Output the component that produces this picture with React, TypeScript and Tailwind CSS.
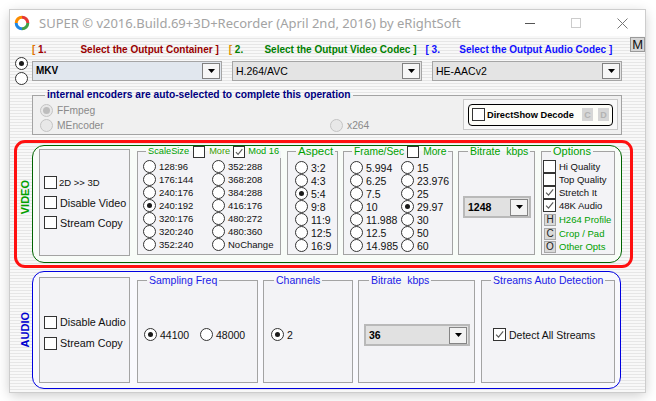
import React from "react";

function Radio({ checked = false, disabled = false }: { checked?: boolean; disabled?: boolean }) {
  return (
    <span
      className={`flex h-[13px] w-[13px] shrink-0 items-center justify-center rounded-full border ${
        disabled ? "border-[#c4c4c4] bg-[#e8e8e8]" : "border-[#333333] bg-white"
      }`}
    >
      {checked ? (
        <span className={`rounded-full ${disabled ? "h-[7px] w-[7px] bg-[#bdbdbd]" : "h-[5px] w-[5px] bg-[#1a1a1a]"}`} />
      ) : null}
    </span>
  );
}

function Check({ checked = false, size = "h-[13px] w-[13px]" }: { checked?: boolean; size?: string }) {
  return (
    <span className={`inline-flex shrink-0 items-center justify-center border border-[#333333] bg-white align-top ${size}`}>
      {checked ? (
        <svg viewBox="0 0 12 12" className="h-full w-full">
          <path d="M2.3 6.1 L4.9 8.8 L10 2.6" fill="none" stroke="#5a5a5a" strokeWidth="1.3" />
        </svg>
      ) : null}
    </span>
  );
}

function Arrow() {
  return (
    <svg width="7" height="4" viewBox="0 0 7 4">
      <path d="M0 0H7L3.5 4Z" fill="#000" />
    </svg>
  );
}

function Combo({ value, bold = false, bg }: { value: string; bold?: boolean; bg: string }) {
  return (
    <div className={`flex h-[20px] w-[190px] items-center border border-[#a5a5a5] ${bg}`}>
      <span className={`flex-1 pl-[3px] leading-[12px] ${bold ? "text-[10px] font-bold" : "text-[10.5px]"}`}>{value}</span>
      <span className="mr-[1px] flex h-[16px] w-[18px] items-center justify-center border border-[#808080] bg-[#f6f6f6]">
        <Arrow />
      </span>
    </div>
  );
}

function Combo2({ value, w }: { value: string; w: string }) {
  return (
    <div className={`flex h-[22px] items-center border-2 border-[#b9b9b9] bg-[#e1e1e1] ${w}`}>
      <span className="flex-1 pl-[3px] text-[10.5px] font-bold leading-[12px]">{value}</span>
      <span className="mr-[1px] flex h-[17px] w-[18px] items-center justify-center border border-[#858585] bg-[#f2f2f2]">
        <Arrow />
      </span>
    </div>
  );
}

function RItem({ label, checked = false, text = "text-[10.5px]" }: { label: string; checked?: boolean; text?: string }) {
  return (
    <div className="flex h-[13px] items-center">
      <Radio checked={checked} />
      <span className={`ml-[3px] whitespace-nowrap leading-[12px] text-[#111] ${text}`}>{label}</span>
    </div>
  );
}

function CItem({ label, checked = false }: { label: string; checked?: boolean }) {
  return (
    <div className="flex h-[13px] items-center">
      <Check checked={checked} />
      <span className="ml-[3px] whitespace-nowrap text-[9.5px] leading-[12px] text-[#111]">{label}</span>
    </div>
  );
}

function BItem({ k, label }: { k: string; label: string }) {
  return (
    <div className="flex h-[13px] items-center pl-[1px]">
      <span className="flex h-[12px] w-[12px] items-center justify-center border border-[#a8a8a8] bg-[#d9d9d9] text-[10px] leading-[10px] text-[#222]">
        {k}
      </span>
      <span className="ml-[3px] whitespace-nowrap text-[9.5px] leading-[12px] text-[#00a000]">{label}</span>
    </div>
  );
}

function Group({
  title,
  legend = "ml-[9px]",
  className,
  children,
}: {
  title: React.ReactNode;
  legend?: string;
  className: string;
  children?: React.ReactNode;
}) {
  return (
    <fieldset className={`min-w-0 shrink-0 border border-[#a3a3a3] bg-[#f3f3f6] ${className}`}>
      <legend className={`whitespace-pre px-[2px] leading-[13px] ${legend}`}>{title}</legend>
      {children}
    </fieldset>
  );
}

function CbRow({ label, small = false }: { label: string; small?: boolean }) {
  return (
    <div className="flex h-[13px] items-center">
      <Check />
      <span className={`whitespace-nowrap leading-[12px] text-[#111] ${small ? "ml-[2px] text-[9.5px]" : "ml-[3px] text-[10.75px]"}`}>
        {label}
      </span>
    </div>
  );
}

function AppIcon() {
  return (
    <svg width="16" height="16" viewBox="0 0 16 16">
      <path d="M8 2.2 A5.8 5.8 0 0 1 13.8 8" fill="none" stroke="#e53935" strokeWidth="3" />
      <path d="M13.8 8 A5.8 5.8 0 0 1 8 13.8" fill="none" stroke="#43a047" strokeWidth="3" />
      <path d="M8 13.8 A5.8 5.8 0 0 1 2.2 8" fill="none" stroke="#1e88e5" strokeWidth="3" />
      <path d="M2.2 8 A5.8 5.8 0 0 1 8 2.2" fill="none" stroke="#fb8c00" strokeWidth="3" />
    </svg>
  );
}

export default function App() {
  const scale1 = ["128:96", "176:144", "240:176", "240:192", "320:176", "320:240", "352:240"];
  const scale2 = ["352:288", "368:208", "384:288", "416:176", "480:272", "480:360", "NoChange"];
  const aspect = ["3:2", "4:3", "5:4", "9:8", "11:9", "12:5", "16:9"];
  const fps1 = ["5.994", "6.25", "7.5", "10", "11.988", "12.5", "14.985"];
  const fps2 = ["15", "23.976", "25", "29.97", "30", "50", "60"];

  return (
    <div className="h-[401px] w-[656px] overflow-hidden bg-white font-['Liberation_Sans',Arial,sans-serif] text-black">
      <div className="ml-[10px] mt-[10px] flex h-[382px] w-[635px] flex-col shadow-[0_0_0_1px_#cdcdcd,0_3px_12px_rgba(0,0,0,0.22)]">
        {/* Title bar */}
        <div className="flex h-[26px] shrink-0 items-center bg-white">
          <span className="ml-[4px] flex">
            <AppIcon />
          </span>
          <span className="ml-[9px] whitespace-nowrap font-['Noto_Sans',sans-serif] text-[13px] leading-[16px] text-[#a3a3a3]">
            SUPER © v2016.Build.69+3D+Recorder (April 2nd, 2016) by eRightSoft
          </span>
          <div className="ml-auto flex h-full">
            <div className="flex w-[46px] items-center justify-center">
              <span className="h-[1px] w-[10px] bg-[#555]" />
            </div>
            <div className="flex w-[46px] items-center justify-center">
              <span className="h-[10px] w-[10px] border border-[#cccccc]" />
            </div>
            <div className="flex w-[46px] items-center justify-center">
              <svg width="11" height="11" viewBox="0 0 11 11">
                <path d="M0.5 0.5 L10.5 10.5 M10.5 0.5 L0.5 10.5" stroke="#777" strokeWidth="1" />
              </svg>
            </div>
          </div>
        </div>

        {/* Body */}
        <div className="flex flex-1 flex-col bg-[repeating-linear-gradient(180deg,#f8f8f8_0px,#f8f8f8_2px,#e6e6e6_2px,#e6e6e6_3px)]">
          {/* labels row */}
          <div className="mt-[8px] flex h-[12px] items-start pl-[22px] text-[10px] font-bold leading-[12px]">
            <div className="flex w-[200px] justify-between whitespace-pre pr-[10px]">
              <span>
                <span className="text-[#e07000]">[ </span>
                <span className="text-[#a00000]">1.</span>
              </span>
              <span className="text-[#990000]">Select the Output Container ]</span>
            </div>
            <div className="flex w-[200px] justify-between whitespace-pre pr-[9px]">
              <span>
                <span className="text-[#e09000]">[ </span>
                <span className="text-[#008000]">2.</span>
              </span>
              <span className="text-[#008000]">Select the Output Video Codec ]</span>
            </div>
            <div className="flex w-[200px] justify-between whitespace-pre pr-[10px]">
              <span className="text-[#1010ff]">[ 3.</span>
              <span className="text-[#1010ff]">Select the Output Audio Codec ]</span>
            </div>
            <span className="-mt-[7px] ml-[8px] flex h-[15px] w-[15px] items-center justify-center border border-[#9a9a9a] bg-[#d6d6d6] text-[13px] font-normal leading-[13px] text-[#111]">
              M
            </span>
          </div>

          {/* combos row */}
          <div className="mt-[1px] flex h-[27px] items-start">
            <div className="flex w-[22px] flex-col gap-[2px] pl-[5px]">
              <Radio checked />
              <Radio />
            </div>
            <div className="mt-[4px] flex gap-[10px]">
              <Combo value="MKV" bold bg="bg-[#e1e7ee]" />
              <Combo value="H.264/AVC" bg="bg-[#e4e4e4]" />
              <Combo value="HE-AACv2" bg="bg-[#e4e4e4]" />
            </div>
          </div>

          {/* encoders group */}
          <fieldset className="ml-[22px] mt-[5px] h-[46px] w-[590px] min-w-0 shrink-0 border border-[#a3a3a3] bg-[#f0f0f0]">
            <legend className="ml-[12px] whitespace-nowrap px-[2px] text-[10.25px] font-bold leading-[12px] text-[#000080]">
              internal encoders are auto-selected to complete this operation
            </legend>
            <div className="flex items-start">
              <div className="flex w-[297px] flex-col gap-[2px] pl-[7px] pt-[3px]">
                <div className="flex h-[13px] items-center">
                  <Radio checked disabled />
                  <span className="ml-[4px] text-[10.25px] leading-[12px] text-[#8a8a8a]">FFmpeg</span>
                </div>
                <div className="flex h-[13px] items-center">
                  <Radio disabled />
                  <span className="ml-[4px] text-[10.25px] leading-[12px] text-[#8a8a8a]">MEncoder</span>
                </div>
              </div>
              <div className="flex w-[133px] pt-[18px]">
                <div className="flex h-[13px] items-center">
                  <Radio disabled />
                  <span className="ml-[4px] text-[10.25px] leading-[12px] text-[#8a8a8a]">x264</span>
                </div>
              </div>
              <div className="-mt-[2px] flex h-[31px] w-[155px] items-center justify-center border border-[#c9c9c9] bg-[#f8f8f8]">
                <div className="flex h-[22px] w-[145px] items-center rounded-[4px] border border-black bg-[#fdfdf8] pl-[3px]">
                  <Check />
                  <span className="ml-[2px] whitespace-nowrap text-[9.25px] font-bold leading-[12px]">DirectShow Decode</span>
                  <div className="ml-auto mr-[3px] flex gap-[5px]">
                    <span className="flex h-[13px] w-[11px] items-center justify-center bg-[#d6d6d6] text-[9px] font-bold leading-[10px] text-[#b3b3b3]">
                      C
                    </span>
                    <span className="flex h-[13px] w-[11px] items-center justify-center bg-[#d6d6d6] text-[9px] font-bold leading-[10px] text-[#b3b3b3]">
                      D
                    </span>
                  </div>
                </div>
              </div>
            </div>
          </fieldset>

          {/* VIDEO red box */}
          <div className="ml-[4px] mt-[5px] flex h-[128px] w-[619px] shrink-0 items-start rounded-[11px] border-[3px] border-[#ff1010]">
            <div className="flex h-full w-[15px] items-center justify-center pb-[14px]">
              <span className="rotate-180 text-[11px] font-bold leading-[12px] text-[#00a000] [writing-mode:vertical-rl]">VIDEO</span>
            </div>
            <div className="mt-[2px] flex h-[118px] w-[590px] items-start rounded-[12px] border border-[#006400] bg-[#f8fcf8]">
              <div className="ml-[6px] mt-[3px] flex h-[107px] w-[91px] shrink-0 flex-col justify-center gap-[7px] border border-[#a3a3a3] bg-[#f3f3f6] pl-[4px]">
                <CbRow label="2D >> 3D" small />
                <CbRow label="Disable Video" />
                <CbRow label="Stream Copy" />
              </div>

              <Group
                className="-mt-[1px] ml-[7px] h-[110px] w-[144px]"
                legend="ml-[8px]"
                title={
                  <span className="inline-flex h-[13px] items-center align-top text-[9.25px]">
                    <span className="text-[#00a000]">ScaleSize</span>
                    <span className="ml-[4px] flex">
                      <Check size="h-[12px] w-[12px]" />
                    </span>
                    <span className="ml-[4px] text-[#3a9c00]">More</span>
                    <span className="ml-[3px] flex">
                      <Check checked size="h-[12px] w-[12px]" />
                    </span>
                    <span className="ml-[3px] text-[#00a000]">Mod 16</span>
                  </span>
                }
              >
                <div className="flex pl-[5px] pt-[2px]">
                  <div className="flex w-[69px] flex-col">
                    {scale1.map((s) => (
                      <RItem key={s} label={s} checked={s === "240:192"} text="text-[9.5px]" />
                    ))}
                  </div>
                  <div className="flex flex-col">
                    {scale2.map((s) => (
                      <RItem key={s} label={s} text="text-[9.5px]" />
                    ))}
                  </div>
                </div>
              </Group>

              <Group
                className="-mt-[1px] ml-[6px] h-[110px] w-[51px]"
                legend="ml-[8px] text-[11.5px] text-[#00a000]"
                title="Aspect"
              >
                <div className="flex flex-col pl-[7px] pt-[3px]">
                  {aspect.map((s) => (
                    <RItem key={s} label={s} checked={s === "5:4"} />
                  ))}
                </div>
              </Group>

              <Group
                className="-mt-[1px] ml-[5px] h-[110px] w-[110px]"
                legend="ml-[8px]"
                title={
                  <span className="inline-flex h-[13px] items-center align-top text-[10.25px]">
                    <span className="text-[#00a000]">Frame/Sec</span>
                    <span className="ml-[3px] flex">
                      <Check size="h-[12px] w-[12px]" />
                    </span>
                    <span className="ml-[4px] text-[#00a000]">More</span>
                  </span>
                }
              >
                <div className="flex pl-[6px] pt-[3px]">
                  <div className="flex w-[51px] flex-col">
                    {fps1.map((s) => (
                      <RItem key={s} label={s} />
                    ))}
                  </div>
                  <div className="flex flex-col">
                    {fps2.map((s) => (
                      <RItem key={s} label={s} checked={s === "29.97"} />
                    ))}
                  </div>
                </div>
              </Group>

              <Group
                className="-mt-[1px] ml-[5px] h-[110px] w-[77px]"
                legend="ml-[9px] text-[10.5px] text-[#00a000]"
                title="Bitrate  kbps"
              >
                <div className="mt-[38px] pl-[4px]">
                  <Combo2 value="1248" w="w-[68px]" />
                </div>
              </Group>

              <Group
                className="-mt-[1px] ml-[6px] h-[110px] w-[74px]"
                legend="ml-[9px] text-[11px] text-[#00a000]"
                title="Options"
              >
                <div className="flex flex-col pl-[1px] pt-[2px]">
                  <CItem label="Hi Quality" />
                  <CItem label="Top Quality" />
                  <CItem label="Stretch It" checked />
                  <CItem label="48K Audio" checked />
                  <div className="mt-[1px]" />
                  <BItem k="H" label="H264 Profile" />
                  <div className="h-[1px]" />
                  <BItem k="C" label="Crop / Pad" />
                  <BItem k="O" label="Other Opts" />
                </div>
              </Group>
            </div>
          </div>

          {/* AUDIO */}
          <div className="ml-[7px] mt-[3px] flex h-[118px] shrink-0 items-start">
            <div className="flex h-full w-[15px] items-center justify-center">
              <span className="rotate-180 text-[11px] font-bold leading-[12px] text-[#0000d0] [writing-mode:vertical-rl]">AUDIO</span>
            </div>
            <div className="flex h-[118px] w-[589px] items-start rounded-[12px] border border-[#0000e0] bg-[#f9f9fd]">
              <div className="ml-[6px] mt-[5px] flex h-[106px] w-[91px] shrink-0 flex-col justify-center gap-[8px] border border-[#a3a3a3] bg-[#f3f3f6] pl-[4px] pt-[5px]">
                <CbRow label="Disable Audio" />
                <CbRow label="Stream Copy" />
              </div>

              <Group className="ml-[7px] mt-[2px] h-[109px] w-[121px]" legend="ml-[9px] text-[10.5px] text-[#1a1ae6]" title="Sampling Freq">
                <div className="flex pl-[6px] pt-[41px]">
                  <div className="w-[56px]">
                    <RItem label="44100" checked />
                  </div>
                  <RItem label="48000" />
                </div>
              </Group>

              <Group className="ml-[5px] mt-[2px] h-[109px] w-[90px]" legend="ml-[10px] text-[10.5px] text-[#1a1ae6]" title="Channels">
                <div className="flex pl-[7px] pt-[41px]">
                  <RItem label="2" checked />
                </div>
              </Group>

              <Group className="ml-[5px] mt-[2px] h-[109px] w-[117px]" legend="ml-[10px] text-[10.5px] text-[#1a1ae6]" title="Bitrate  kbps">
                <div className="mt-[37px] pl-[5px]">
                  <Combo2 value="36" w="w-[106px]" />
                </div>
              </Group>

              <Group
                className="ml-[6px] mt-[2px] h-[109px] w-[134px]"
                legend="ml-[9px] text-[10.5px] text-[#1a1ae6]"
                title="Streams Auto Detection"
              >
                <div className="flex pl-[11px] pt-[41px]">
                  <div className="flex h-[13px] items-center">
                    <Check checked />
                    <span className="ml-[3px] whitespace-nowrap text-[10.5px] leading-[12px] text-[#111]">Detect All Streams</span>
                  </div>
                </div>
              </Group>
            </div>
          </div>
        </div>
      </div>
    </div>
  );
}
